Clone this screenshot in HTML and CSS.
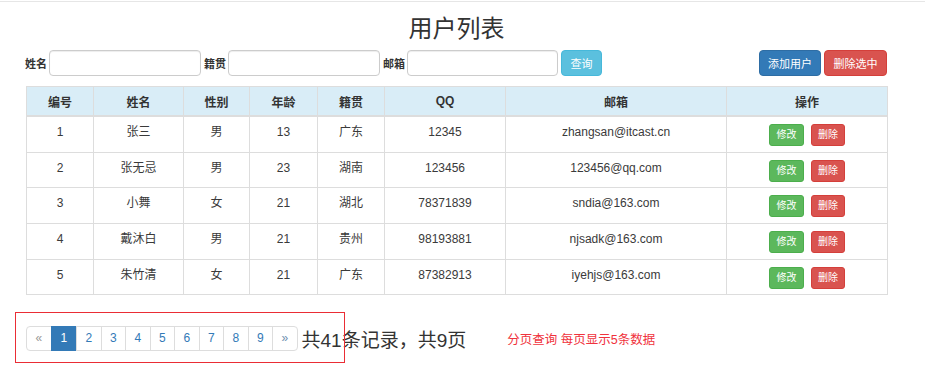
FILE: index.html
```html
<!DOCTYPE html>
<html lang="zh-CN">
<head>
  <meta charset="UTF-8">
  <title>用户信息管理系统</title>
  <link rel="stylesheet" href="styles.css">
</head>
<body>

  <div class="topline"></div>

  <div class="container">
    <h3 class="title">用户列表</h3>

    <div class="toolbar">
      <form class="search">
        <label class="field-label" for="name">姓名</label>
        <input class="field" type="text" id="name">
        <label class="field-label" for="address">籍贯</label>
        <input class="field" type="text" id="address">
        <label class="field-label" for="email">邮箱</label>
        <input class="field" type="text" id="email">
        <button class="btn btn-query" type="button">查询</button>
      </form>

      <div class="actions">
        <button class="btn btn-primary" type="button">添加用户</button>
        <button class="btn btn-danger" type="button">删除选中</button>
      </div>
    </div>

    <table class="users">
      <colgroup>
        <col style="width: 67px">
        <col style="width: 90px">
        <col style="width: 66px">
        <col style="width: 68px">
        <col style="width: 67px">
        <col style="width: 121px">
        <col style="width: 221px">
        <col style="width: 161px">
      </colgroup>
      <thead>
        <tr>
          <th>编号</th>
          <th>姓名</th>
          <th>性别</th>
          <th>年龄</th>
          <th>籍贯</th>
          <th>QQ</th>
          <th>邮箱</th>
          <th>操作</th>
        </tr>
      </thead>
      <tbody>
        <tr>
          <td>1</td><td>张三</td><td>男</td><td>13</td><td>广东</td><td>12345</td><td>zhangsan@itcast.cn</td>
          <td><a class="btn-xs btn-edit" href="#">修改</a><a class="btn-xs btn-remove" href="#">删除</a></td>
        </tr>
        <tr>
          <td>2</td><td>张无忌</td><td>男</td><td>23</td><td>湖南</td><td>123456</td><td>123456@qq.com</td>
          <td><a class="btn-xs btn-edit" href="#">修改</a><a class="btn-xs btn-remove" href="#">删除</a></td>
        </tr>
        <tr>
          <td>3</td><td>小舞</td><td>女</td><td>21</td><td>湖北</td><td>78371839</td><td>sndia@163.com</td>
          <td><a class="btn-xs btn-edit" href="#">修改</a><a class="btn-xs btn-remove" href="#">删除</a></td>
        </tr>
        <tr>
          <td>4</td><td>戴沐白</td><td>男</td><td>21</td><td>贵州</td><td>98193881</td><td>njsadk@163.com</td>
          <td><a class="btn-xs btn-edit" href="#">修改</a><a class="btn-xs btn-remove" href="#">删除</a></td>
        </tr>
        <tr>
          <td>5</td><td>朱竹清</td><td>女</td><td>21</td><td>广东</td><td>87382913</td><td>iyehjs@163.com</td>
          <td><a class="btn-xs btn-edit" href="#">修改</a><a class="btn-xs btn-remove" href="#">删除</a></td>
        </tr>
      </tbody>
    </table>

    <div class="pager-row">
      <ul class="pagination">
        <li><a class="prev" href="#">&laquo;</a></li>
        <li><a class="active" href="#">1</a></li>
        <li><a href="#">2</a></li>
        <li><a href="#">3</a></li>
        <li><a href="#">4</a></li>
        <li><a href="#">5</a></li>
        <li><a href="#">6</a></li>
        <li><a href="#">7</a></li>
        <li><a href="#">8</a></li>
        <li><a href="#">9</a></li>
        <li><a class="next" href="#">&raquo;</a></li>
      </ul>
      <span class="total">共41条记录，共9页</span>
      <span class="note">分页查询 每页显示5条数据</span>
      <div class="mark"></div>
    </div>
  </div>

</body>
</html>
```

FILE: styles.css
```css
body {
  margin: 0;
  padding-top: 1px;
  padding-bottom: 40px;
  font-family: "Liberation Sans", "Noto Sans CJK SC", sans-serif;
  color: #333;
  background-color: #fff;
}

.topline {
  border-top: 1px solid #e6e6e6;
}

.container {
  width: 861px;
  margin-left: 26px;
}

.title {
  margin: 12px 0 0;
  font-size: 24px;
  line-height: 30px;
  font-weight: normal;
  text-align: center;
}

/* search bar + action buttons */
.toolbar {
  display: flex;
  justify-content: space-between;
  align-items: center;
  margin-top: 6px;
  margin-left: -1px;
}

.search {
  display: flex;
  align-items: center;
  margin: 0;
}

.field-label {
  font-size: 11px;
  font-weight: bold;
  margin-right: 2px;
}

.field {
  box-sizing: border-box;
  width: 152px;
  height: 26px;
  margin-right: 3px;
  border: 1px solid #ccc;
  border-radius: 4px;
  box-shadow: inset 0 1px 1px rgba(0, 0, 0, 0.075);
}

.field:last-of-type {
  width: 151px;
  margin-right: 3px;
}

.btn {
  box-sizing: border-box;
  height: 26px;
  padding: 0 6px;
  border: 1px solid transparent;
  border-radius: 4px;
  font-family: inherit;
  font-size: 11px;
  color: #fff;
  cursor: pointer;
}

.btn-query {
  width: 41px;
  padding: 0;
  background-color: #5bc0de;
  border-color: #46b8da;
}

.actions {
  display: flex;
  gap: 3px;
}

.btn-primary {
  width: 62px;
  background-color: #337ab7;
  border-color: #2e6da4;
}

.btn-danger {
  width: 63px;
  background-color: #d9534f;
  border-color: #d43f3a;
}

/* user table */
.users {
  width: 861px;
  margin-top: 10px;
  border-collapse: collapse;
  table-layout: fixed;
  font-size: 12px;
  border: 1px solid #ddd;
}

.users th {
  height: 28px;
  padding: 0;
  background-color: #d9edf7;
  border: 1px solid #ddd;
  border-bottom: 2px solid #ddd;
  font-weight: bold;
  text-align: center;
}

.users td {
  padding: 7px 6px 5.7px;
  line-height: 17px;
  border: 1px solid #ddd;
  text-align: center;
  vertical-align: top;
  color: #3a3a3a;
}

.btn-xs {
  display: inline-block;
  box-sizing: border-box;
  width: 35px;
  height: 22px;
  line-height: 20px;
  border: 1px solid transparent;
  border-radius: 3px;
  font-size: 10px;
  color: #fff;
  text-decoration: none;
}

.btn-edit {
  background-color: #5cb85c;
  border-color: #4cae4c;
}

.btn-remove {
  width: 34px;
  margin-left: 7px;
  background-color: #d9534f;
  border-color: #d43f3a;
}

/* pagination */
.pager-row {
  position: relative;
  display: flex;
  align-items: center;
  margin-top: 30px;
}

.pagination {
  display: flex;
  margin: 0;
  padding: 0;
  list-style: none;
}

.pagination a {
  display: block;
  box-sizing: border-box;
  width: 25.5px;
  height: 25px;
  margin-left: -1px;
  line-height: 23px;
  border: 1px solid #ddd;
  font-size: 12px;
  text-align: center;
  color: #337ab7;
  text-decoration: none;
}

.pagination li:first-child a {
  margin-left: 0;
  border-radius: 4px 0 0 4px;
}

.pagination li:last-child a {
  border-radius: 0 4px 4px 0;
}

.pagination .prev {
  color: #999;
}

.pagination .next {
  color: #6f8fb0;
}

.pagination .active {
  width: 26.5px;
  background-color: #337ab7;
  border-color: #337ab7;
  color: #fff;
}

.total {
  margin-left: 4px;
  font-size: 19px;
}

.note {
  margin-left: 41px;
  font-size: 12.5px;
  color: #f0323c;
}

/* red annotation frame round the pager */
.mark {
  position: absolute;
  left: -11px;
  top: -13px;
  width: 330px;
  height: 51px;
  border: 1px solid #ea2d35;
  box-sizing: border-box;
}
```
